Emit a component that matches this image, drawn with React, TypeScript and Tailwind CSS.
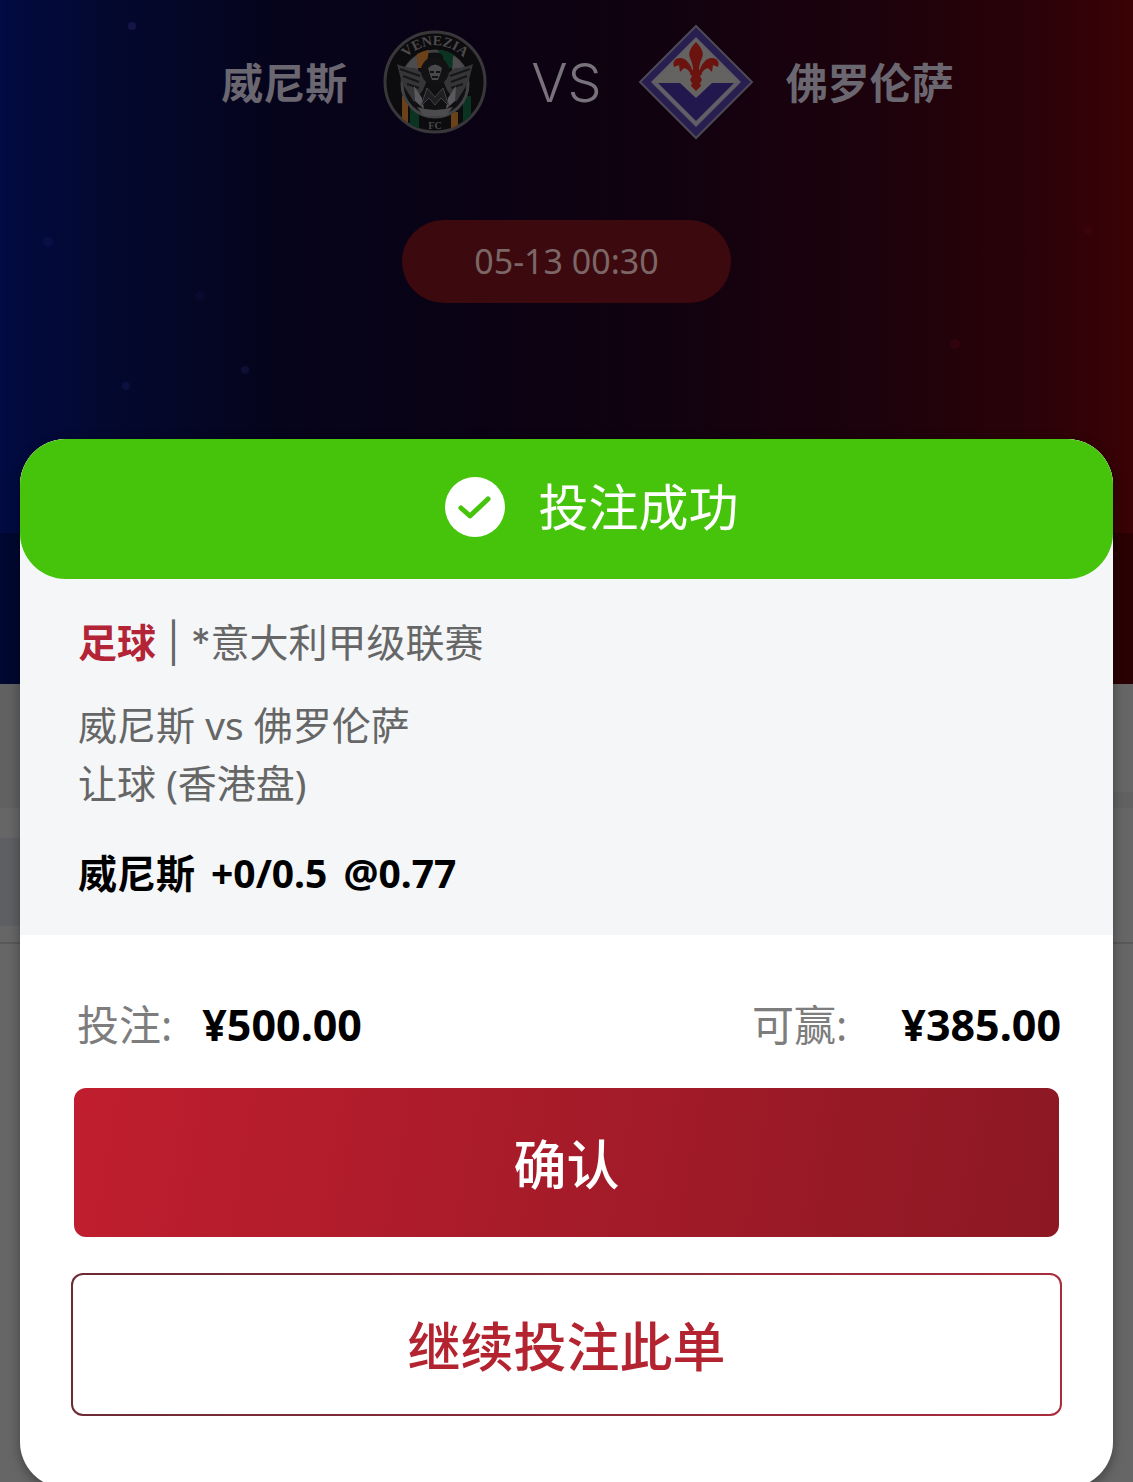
const font = "font-['Noto_Sans','Noto_Sans_CJK_SC',sans-serif]";

const stars = [
  { x: 132, y: 26, r: 4, fill: "#3a2f78" },
  { x: 126, y: 386, r: 4, fill: "#1d2060" },
  { x: 245, y: 370, r: 4, fill: "#23205c" },
  { x: 200, y: 296, r: 5, fill: "#12123f" },
  { x: 48, y: 242, r: 5, fill: "#101a5c" },
  { x: 955, y: 344, r: 5, fill: "#4a0815" },
  { x: 1088, y: 230, r: 5, fill: "#4a0510" },
];

function VeneziaCrest() {
  return (
    <svg viewBox="0 0 104 104" className="size-[104px]" role="img" aria-label="威尼斯">
      <defs>
        <clipPath id="crest-clip">
          <circle cx="52" cy="52" r="49" />
        </clipPath>
        <path id="crest-arc" d="M15 42 A39 39 0 0 1 89 42" />
      </defs>
      <circle cx="52" cy="52" r="50" fill="#0c0b0d" stroke="#39373a" strokeWidth="3" />
      <g clipPath="url(#crest-clip)">
        <path d="M19 66h6v32h-6zM68 82h7v20h-7z" fill="#6a4118" />
        <path d="M27 78h9v26h-9zM80 66h8v30h-8z" fill="#0a3321" />
      </g>
      <circle cx="52" cy="54" r="33" fill="#101012" stroke="#424144" strokeWidth="3" />
      <path d="M34 24q9-4 12-4l-3 18h-9z" fill="#6a4118" />
      <path d="M54 20q9 0 17 5l-2 13h-8l-1-12z" fill="#0a3321" />
      <path d="M22 39q6-10 12-13l1 15zM82 39q-6-10-12-13l-1 15z" fill="#4c4b4d" />
      <path
        d="M14 34q8 4 18 4l13 10-5 12-9 12-9-14-4-8zM90 34q-8 4-18 4L59 48l5 12 9 12 9-14 4-8z"
        fill="#363538"
      />
      <path
        d="M17 39l20 7M20 46l16 6M24 54l12 4M87 39l-20 7M84 46l-16 6M80 54l-12 4"
        stroke="#161518"
        strokeWidth="2"
      />
      <circle cx="52" cy="41" r="14" fill="#121114" />
      <path d="M45 38q7-7 14 0l-2 7-2 5h-6l-2-5z" fill="#49484b" />
      <path d="M47 42h4M53 42h4M49 47h6" stroke="#121114" strokeWidth="2" />
      <path d="M31 56l8 12 2 11-9-8zM73 56l-8 12-2 11 9-8z" fill="#5a595e" />
      <path d="M38 76l6-18 8 9 8-9 6 18-8-8-6 7-6-7z" fill="#1f1e21" stroke="#434245" />
      <path d="M34 77q18 6 36 0l-7 9H41z" fill="#4c4b4e" />
      <text fill="#4c4a4d" className="font-['Liberation_Serif',serif] text-[14px] font-bold">
        <textPath href="#crest-arc" startOffset="50%" textAnchor="middle">
          VENEZIA
        </textPath>
      </text>
      <text
        x="52"
        y="99"
        textAnchor="middle"
        fill="#4c4a4d"
        className="font-['Liberation_Serif',serif] text-[10px] font-bold"
      >
        FC
      </text>
    </svg>
  );
}

function FiorentinaCrest() {
  return (
    <svg viewBox="0 0 116 116" className="size-[116px]" role="img" aria-label="佛罗伦萨">
      <path d="M58 2L114 58 58 114 2 58z" fill="#281f50" stroke="#4c4856" strokeWidth="2" />
      <path d="M58 13L103 58 58 103 13 58z" fill="#625e66" />
      <path d="M58 15L99 57 58 75 17 57z" fill="#646362" />
      <path d="M20 59h22l16 15 16-15h22L58 97z" fill="#22184e" />
      <g fill="#6b130e">
        <path d="M58 18c-6 6-8 11-6 16 2 4 3 8 3 12h6c0-4 1-8 3-12 2-5 0-10-6-16z" />
        <path d="M55 49c-2-9-7-15-13-15-5 0-8 4-6 9l5-2 1 7 4-4c4 1 6 4 7 7zM61 49c2-9 7-15 13-15 5 0 8 4 6 9l-5-2-1 7-4-4c-4 1-6 4-7 7z" />
        <path d="M52 46h12v4l-2 2 2 4-2 3 1 3-5 5-5-5 1-3-2-3 2-4-2-2z" />
      </g>
    </svg>
  );
}

function MatchHeader() {
  return (
    <header className="relative h-[684px] bg-[linear-gradient(90deg,#020b42_0%,#03082e_10%,#06041b_25%,#0b0213_45%,#12020f_60%,#1d020c_78%,#2b0208_92%,#3a0205_100%)]">
      <svg className="absolute inset-0 size-full" aria-hidden="true">
        {stars.map((star) => (
          <circle key={star.x} cx={star.x} cy={star.y} r={star.r} fill={star.fill} opacity="0.35" />
        ))}
      </svg>
      <div className="absolute inset-x-0 bottom-0 h-[151px] bg-black/25" />
      <div className="relative flex flex-col items-center pt-6">
        <div className="grid w-full grid-cols-[1fr_auto_1fr] items-center gap-9 text-[42px] font-bold text-[#6b6770]">
          <div className="flex items-center justify-end gap-9 pr-2">
            <span>威尼斯</span>
            <VeneziaCrest />
          </div>
          <span className="font-['Inter',sans-serif] text-[54px] font-light text-[#77727b]">VS</span>
          <div className="flex items-center gap-8">
            <FiorentinaCrest />
            <span>佛罗伦萨</span>
          </div>
        </div>
        <time className="mt-20 rounded-full bg-[#3c090e] px-[72px] py-4 text-[34px] leading-[51px] text-[#7b6767]">
          05-13 00:30
        </time>
      </div>
    </header>
  );
}

function SuccessIcon() {
  return (
    <svg viewBox="0 0 60 60" className="size-[60px]" aria-hidden="true">
      <circle cx="30" cy="30" r="30" fill="#fff" />
      <path
        d="M16 31l9 8 18-17"
        fill="none"
        stroke="#46c30b"
        strokeWidth="5"
        strokeLinecap="round"
        strokeLinejoin="round"
      />
    </svg>
  );
}

function Amount({ label, value, gap }: { label: string; value: string; gap: string }) {
  return (
    <div className={`flex items-center ${gap}`}>
      <dt className="text-[42px] text-[#7d7d7d]">{label}</dt>
      <dd className="text-[43px] font-bold text-black">{value}</dd>
    </div>
  );
}

function BetDialog() {
  return (
    <section
      role="dialog"
      aria-labelledby="bet-title"
      className="z-10 col-start-1 row-start-1 mx-5 mt-[439px] self-start rounded-[46px] bg-white shadow-[0_4px_12px_rgba(0,0,0,0.35)]"
    >
      <div className="rounded-t-[46px] bg-[#f4f6f8]">
        <div className="flex h-[140px] items-center justify-center gap-[34px] rounded-[46px] bg-[#46c30b] pb-1 pl-[50px] text-white">
          <SuccessIcon />
          <h1 id="bet-title" className="text-[50px]">
            投注成功
          </h1>
        </div>
        <div className="px-[58px] pt-[35px] pb-[33px] text-[39px] leading-[58px] text-[#666]">
          <p className="font-['Inter','Noto_Sans_CJK_SC',sans-serif]">
            <span className="font-bold text-[#b32436]">足球</span> | *意大利甲级联赛
          </p>
          <p className="mt-6">威尼斯 vs 佛罗伦萨</p>
          <p>让球 (香港盘)</p>
          <p className="mt-8 flex gap-4 font-bold text-black">
            <span>威尼斯</span>
            <span>+0/0.5</span>
            <span>@0.77</span>
          </p>
        </div>
      </div>
      <div className="px-[51px] pt-[60px] pb-[72px]">
        <dl className="flex justify-between pr-px pl-[6px] leading-[60px]">
          <Amount label="投注:" value="¥500.00" gap="gap-[30px]" />
          <Amount label="可赢:" value="¥385.00" gap="gap-[54px]" />
        </dl>
        <div className="mt-[33px] px-[3px]">
          <button
            type="button"
            className="h-[149px] w-full rounded-xl bg-[linear-gradient(100deg,#c01e2e,#8c1824)] pt-1 text-[53px] font-medium text-white"
          >
            确认
          </button>
        </div>
        <button
          type="button"
          className="mt-9 h-[143px] w-full rounded-xl border-2 border-transparent pt-1 text-[53px] font-medium text-[#b32430] [background:linear-gradient(#fff,#fff)_padding-box,linear-gradient(90deg,#6c2a34,#a82c3c)_border-box]"
        >
          继续投注此单
        </button>
      </div>
    </section>
  );
}

export default function App() {
  return (
    <main className={`grid h-screen overflow-hidden bg-[#666] ${font}`}>
      <div className="col-start-1 row-start-1">
        <MatchHeader />
        <div className="h-[108px] bg-[linear-gradient(90deg,#616161_50%,#666_50%)]" />
        <div className="h-4 bg-[#616161]" />
        <div className="h-[30px] bg-[#666]" />
        <div className="h-[88px] bg-[linear-gradient(90deg,#5d5f62_50%,#666_50%)]" />
        <div className="h-4" />
        <div className="h-[2px] bg-[#585858]" />
      </div>
      <BetDialog />
    </main>
  );
}
